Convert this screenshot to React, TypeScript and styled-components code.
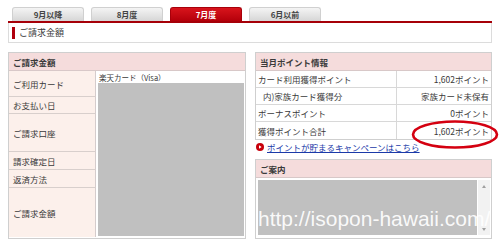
import React from "react";
import styled, { createGlobalStyle } from "styled-components";

const Global = createGlobalStyle`
  html, body { margin: 0; padding: 0; background: #fff; }
  body { font-family: "Noto Sans CJK JP", "Liberation Sans", sans-serif; color: #3a3a3a; }
  * { box-sizing: border-box; }
`;

const Page = styled.div`
  position: relative;
  width: 500px;
  height: 245px;
  padding: 7px 8px 0 8px;
  overflow: hidden;
`;

const Tabs = styled.div`
  display: flex;
  gap: 7px;
  padding-left: 4px;
  height: 14px;
`;

const Tab = styled.div<{ $active?: boolean }>`
  width: 72px;
  height: 14px;
  border-radius: 3px 3px 0 0;
  display: flex;
  align-items: center;
  justify-content: center;
  font-size: 8px;
  font-weight: bold;
  color: ${(p) => (p.$active ? "#fff" : "#444")};
  background: ${(p) =>
    p.$active
      ? "linear-gradient(#d8141c, #b4000a)"
      : "linear-gradient(#f4f4f4, #d6d6d6)"};
  border: 1px solid ${(p) => (p.$active ? "#a8000a" : "#d0d0d0")};
  border-bottom: none;
`;

const RedLine = styled.div`
  height: 2px;
  background: #a60008;
`;

const TitleBox = styled.div`
  height: 20px;
  border: 1px solid #dcdcdc;
  border-top: none;
  display: flex;
  align-items: center;
  gap: 4px;
  padding-left: 3px;
  font-size: 9px;
`;

const RedBar = styled.span`
  width: 3px;
  height: 12px;
  background: #b0000c;
`;

const Panels = styled.div`
  display: flex;
  gap: 9px;
  margin-top: 9px;
`;

const LeftPanel = styled.div`
  width: 238px;
  display: grid;
  grid-template-columns: 87px 1fr;
  grid-template-rows: 18px 26px 17px 38px 18px 18px 49px;
  border: 1px solid #cfcfcf;
  font-size: 8.5px;
`;

const PanelHead = styled.div<{ $span?: boolean }>`
  ${(p) => (p.$span ? "grid-column: 1 / 3;" : "")}
  background: #f5dcdc;
  border-bottom: 1px solid #d8c8c8;
  display: flex;
  align-items: center;
  padding-left: 4px;
  font-weight: bold;
  font-size: 8.5px;
  height: 18px;
`;

const LabelCell = styled.div<{ $last?: boolean }>`
  grid-column: 1;
  background: #fcf0eb;
  border-right: 1px solid #d4cccc;
  border-bottom: ${(p) => (p.$last ? "none" : "1px solid #d8cfcc")};
  display: flex;
  align-items: center;
  padding-left: 4px;
`;

const ValueCell = styled.div`
  grid-column: 2;
  grid-row: 2 / 8;
  display: flex;
  flex-direction: column;
  padding: 2px 1px 1px 2px;
  background: #fff;
`;

const CardName = styled.div`
  font-size: 7.5px;
  height: 10px;
  line-height: 10px;
  padding-left: 1px;
`;

const GrayBlock = styled.div`
  flex: 1;
  background: #c0c0c0;
`;

const RightCol = styled.div`
  width: 237px;
  display: flex;
  flex-direction: column;
`;

const PointTable = styled.div`
  border: 1px solid #cfcfcf;
  font-size: 8.5px;
`;

const PointRow = styled.div<{ $last?: boolean }>`
  display: grid;
  grid-template-columns: 141px 1fr;
  height: 17px;
  border-bottom: ${(p) => (p.$last ? "none" : "1px solid #d8d8d8")};
`;

const PointLabel = styled.div<{ $indent?: boolean }>`
  display: flex;
  align-items: center;
  padding-left: ${(p) => (p.$indent ? "7px" : "2px")};
  border-right: 1px solid #d8d8d8;
`;

const PointValue = styled.div`
  display: flex;
  align-items: center;
  justify-content: flex-end;
  padding-right: 2px;
`;

const LinkLine = styled.div`
  display: flex;
  align-items: center;
  gap: 3px;
  height: 13px;
  padding-left: 1px;
  font-size: 8.5px;
`;

const LinkText = styled.a`
  color: #1b3aa8;
  text-decoration: underline;
`;

const InfoBox = styled.div`
  margin-top: 6px;
  height: 80px;
  border: 1px solid #cfcfcf;
  display: flex;
  flex-direction: column;
`;

const InfoBody = styled.div`
  flex: 1;
  display: flex;
  padding: 2px 1px 3px 2px;
  gap: 1px;
`;

const InfoGray = styled.div`
  flex: 1;
  background: #c0c0c0;
`;

const Scrollbar = styled.div`
  width: 12px;
  background: #f2f2f2;
  display: flex;
  flex-direction: column;
  justify-content: space-between;
  align-items: center;
  padding: 5px 0 4px;
`;

const Arrow = styled.span<{ $down?: boolean }>`
  width: 0;
  height: 0;
  border-left: 2.5px solid transparent;
  border-right: 2.5px solid transparent;
  ${(p) =>
    p.$down ? "border-top: 3px solid #a0a0a0;" : "border-bottom: 3px solid #a0a0a0;"}
`;

const Watermark = styled.div`
  position: absolute;
  left: 258px;
  top: 207px;
  font-family: "Liberation Sans", Arial, sans-serif;
  font-size: 21px;
  color: rgba(255, 255, 255, 0.92);
  white-space: nowrap;
  pointer-events: none;
`;

const Ellipse = styled.svg`
  position: absolute;
  left: 411px;
  top: 118px;
  pointer-events: none;
`;

const PlayIcon = () => (
  <svg width="8" height="8" viewBox="0 0 8 8">
    <circle cx="4" cy="4" r="4" fill="#c8000c" />
    <path d="M3 2.2 L5.6 4 L3 5.8 Z" fill="#fff" />
  </svg>
);

const points = [
  { label: "カード利用獲得ポイント", value: "1,602ポイント" },
  { label: "内)家族カード獲得分", value: "家族カード未保有", indent: true },
  { label: "ボーナスポイント", value: "0ポイント" },
  { label: "獲得ポイント合計", value: "1,602ポイント" },
];

const labels = ["ご利用カード", "お支払い日", "ご請求口座", "請求確定日", "返済方法", "ご請求金額"];

export default function App() {
  return (
    <Page>
      <Global />
      <Tabs>
        <Tab>9月以降</Tab>
        <Tab>8月度</Tab>
        <Tab $active>7月度</Tab>
        <Tab>6月以前</Tab>
      </Tabs>
      <RedLine />
      <TitleBox>
        <RedBar />
        ご請求金額
      </TitleBox>
      <Panels>
        <LeftPanel>
          <PanelHead $span>ご請求金額</PanelHead>
          {labels.map((l, i) => (
            <LabelCell key={l} $last={i === labels.length - 1}>
              {l}
            </LabelCell>
          ))}
          <ValueCell>
            <CardName>楽天カード（Visa）</CardName>
            <GrayBlock />
          </ValueCell>
        </LeftPanel>
        <RightCol>
          <PointTable>
            <PanelHead>当月ポイント情報</PanelHead>
            {points.map((p, i) => (
              <PointRow key={p.label} $last={i === points.length - 1}>
                <PointLabel $indent={p.indent}>{p.label}</PointLabel>
                <PointValue>{p.value}</PointValue>
              </PointRow>
            ))}
          </PointTable>
          <LinkLine>
            <PlayIcon />
            <LinkText>ポイントが貯まるキャンペーンはこちら</LinkText>
          </LinkLine>
          <InfoBox>
            <PanelHead>ご案内</PanelHead>
            <InfoBody>
              <InfoGray />
              <Scrollbar>
                <Arrow />
                <Arrow $down />
              </Scrollbar>
            </InfoBody>
          </InfoBox>
        </RightCol>
      </Panels>
      <Watermark>http://isopon-hawaii.com/</Watermark>
      <Ellipse width="90" height="34" viewBox="0 0 90 34">
        <ellipse cx="44" cy="16.5" rx="42" ry="13" fill="none" stroke="#d40010" strokeWidth="2.6" />
      </Ellipse>
    </Page>
  );
}
